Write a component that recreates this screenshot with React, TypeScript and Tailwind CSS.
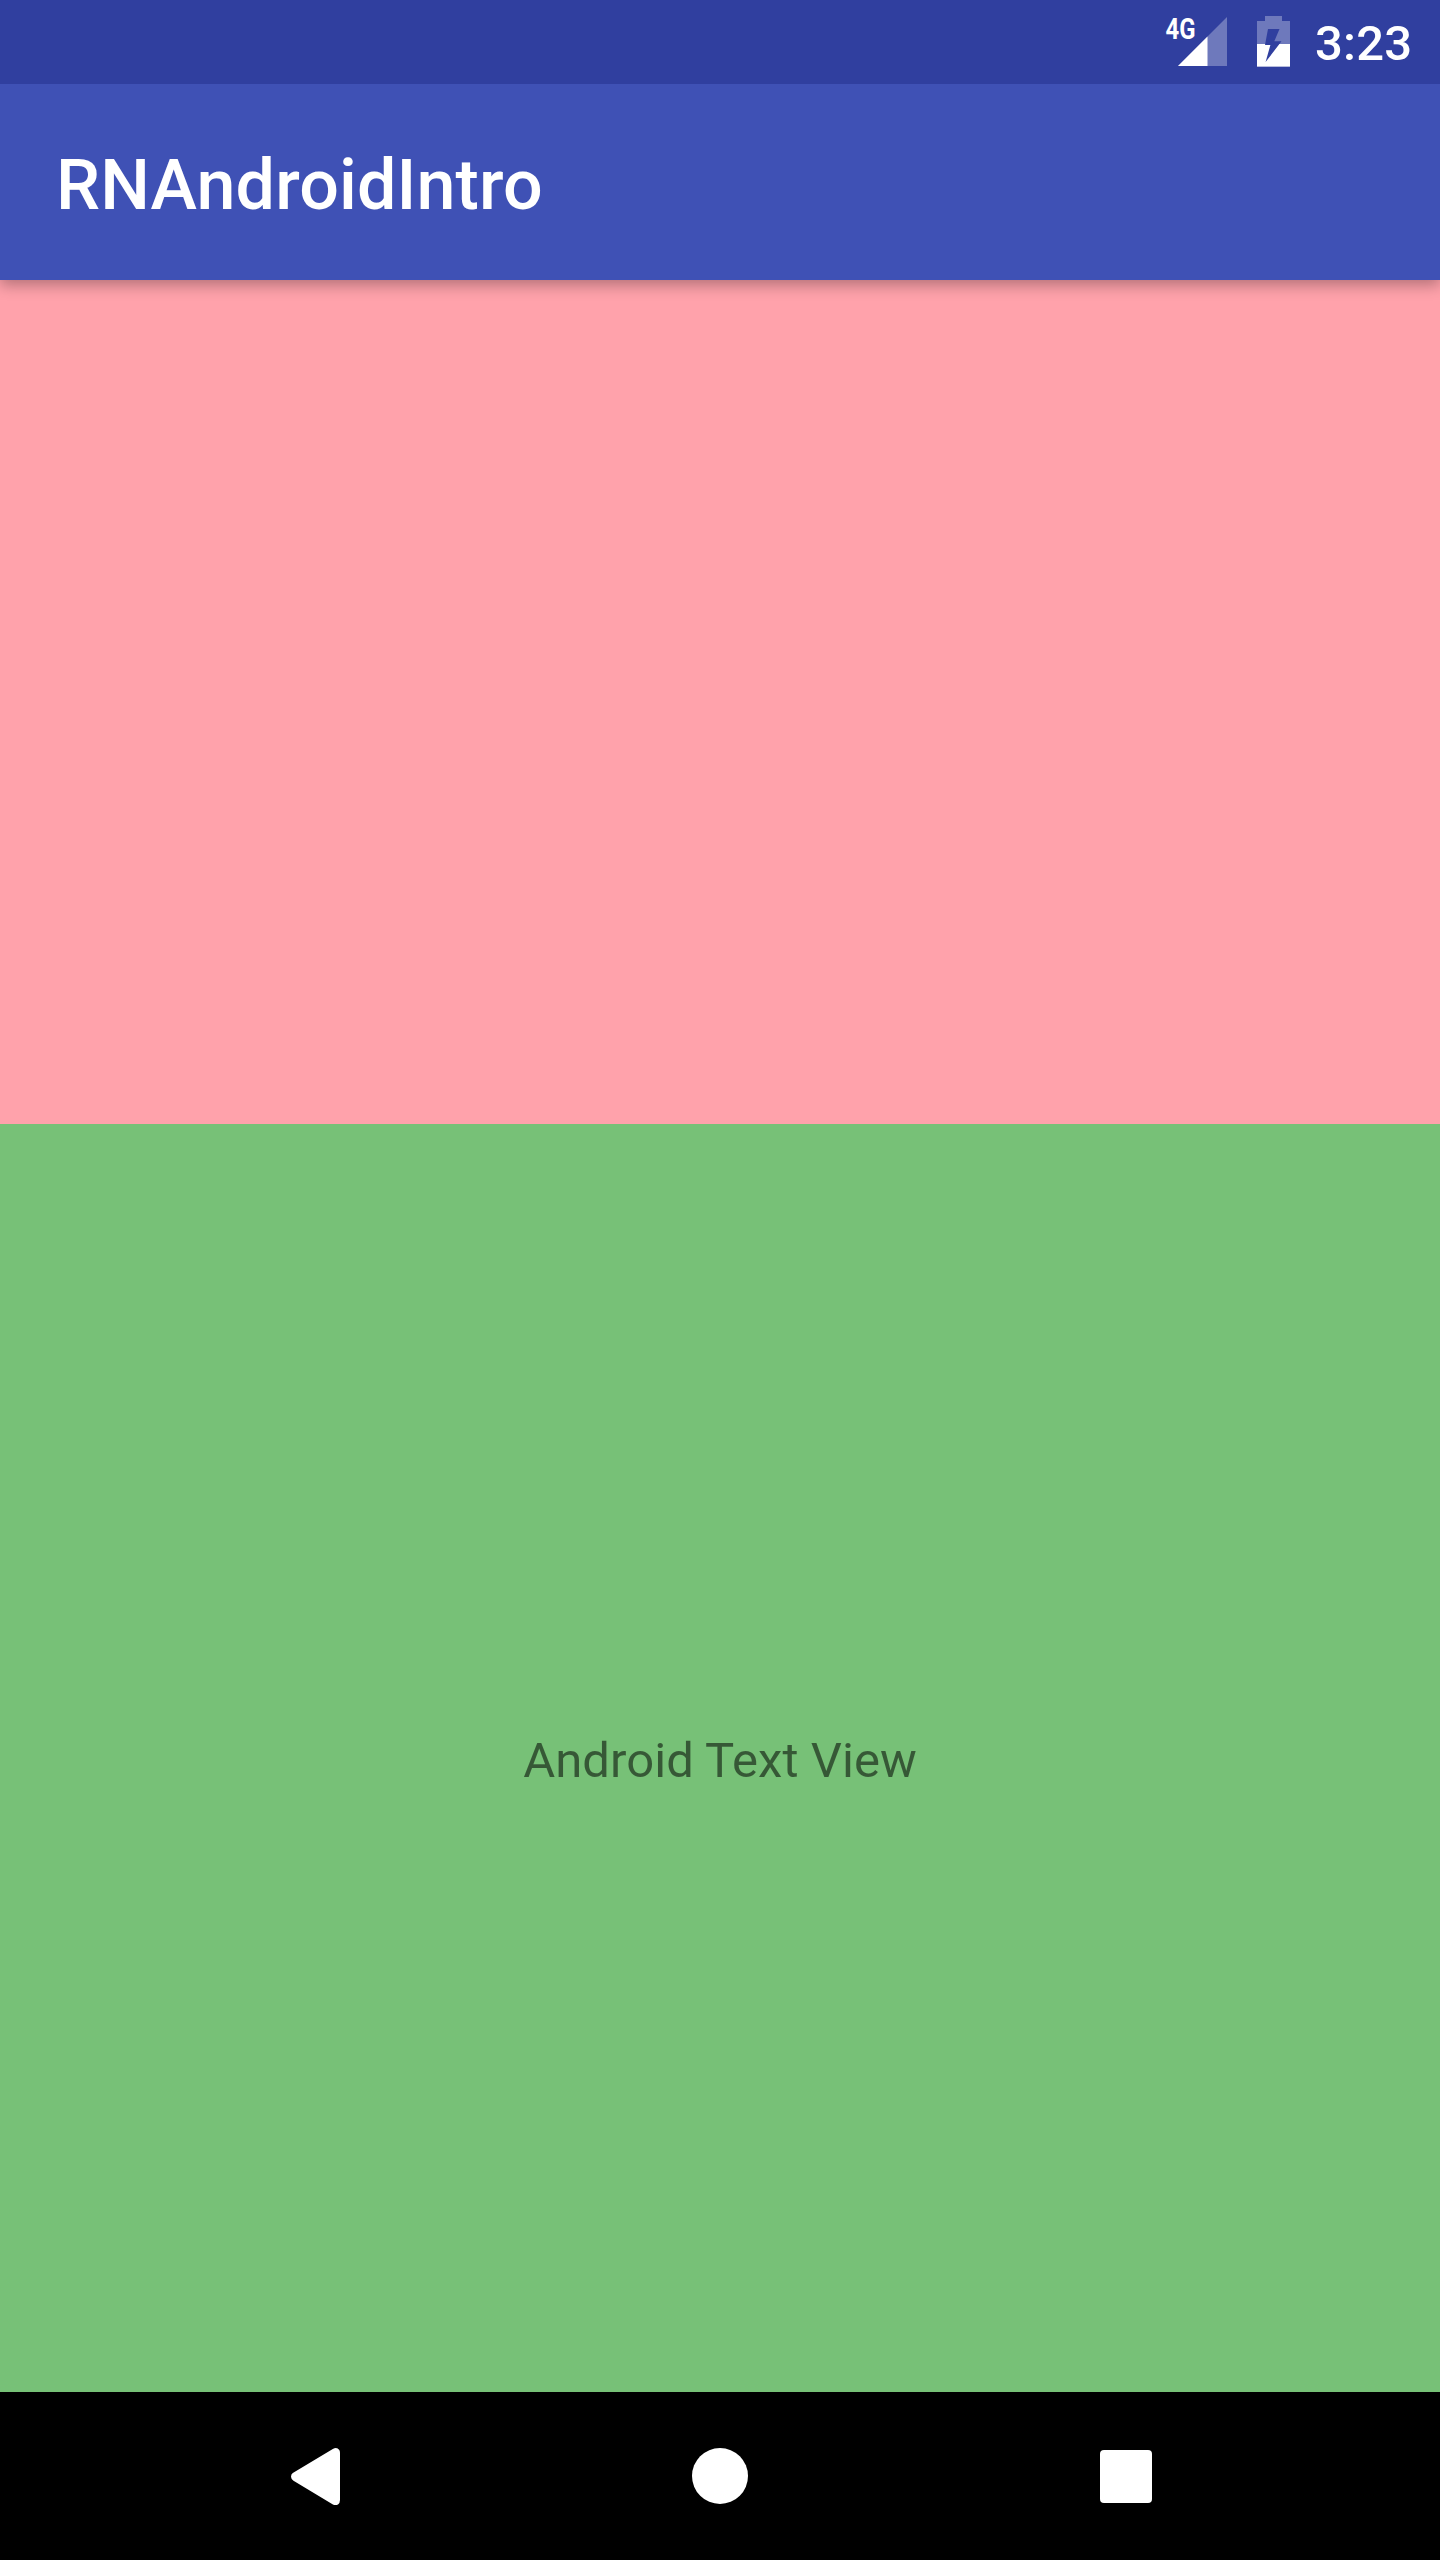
function SignalIcon() {
  return (
    <svg width="68" height="76" viewBox="1160 4 68 76" className="block overflow-visible">
      <path d="M1178 66 1227 66 1227 17Z" fill="#fff" fillOpacity="0.3" />
      <path d="M1178 66 1207.5 66 1207.5 36.5Z" fill="#fff" />
      <text
        x="1165.6"
        y="39"
        fontSize="29"
        fontWeight="700"
        textLength="30"
        lengthAdjust="spacingAndGlyphs"
        fill="#fff"
      >
        4G
      </text>
    </svg>
  );
}

function BatteryIcon() {
  return (
    <svg width="34" height="56" viewBox="1257 14 34 56" className="block">
      <path d="M1257 21H1265V16H1282V21H1290V67H1257Z" fill="#fff" fillOpacity="0.3" />
      <path d="M1257 44H1290V66.500H1257Z" fill="#fff" />
      <path d="M1268 29H1279.5L1274.3 41.2H1281.5L1265.6 62 1270.4 45H1265Z" fill="#303f9f" />
    </svg>
  );
}

function StatusBar() {
  return (
    <div className="relative z-10 flex h-[84px] items-center bg-[#303f9f] pl-[1160px] text-white">
      <SignalIcon />
      <div className="ml-[29px]">
        <BatteryIcon />
      </div>
      <span className="ml-[24px] mt-[3px] whitespace-nowrap text-[49px] font-medium leading-[58px] tracking-[0.25px]">3:23</span>
    </div>
  );
}

function NavigationBar() {
  return (
    <nav className="flex h-[168px] items-start bg-black text-white">
      <svg width="50" height="58" viewBox="290 2447 50 58" className="ml-[290px] mt-[55px] block" fill="currentColor">
        <path d="M292.8 2473.1 332.8 2449Q337 2446.800 339.300 2450Q340 2451 340 2453V2500Q340 2503 338 2504.400Q335.500 2506 332.500 2504.200L293.500 2480.800Q291 2479 291 2476.800Q291 2474.400 292.800 2473.100Z" />
      </svg>
      <div className="ml-[351.500px] mt-[55.500px] size-[56px] rounded-full bg-white" />
      <div className="ml-[352px] mt-[58px] size-[52.500px] rounded-[4px] bg-white" />
    </nav>
  );
}

export default function App() {
  return (
    <div className="flex h-[2560px] w-[1440px] flex-col overflow-hidden font-['Roboto',sans-serif]">
      <StatusBar />
      <header className="relative flex h-[196px] items-center bg-[#3f51b5] px-[56px] shadow-[0_5px_14px_rgba(0,0,0,0.3)]">
        <h1 className="mt-[6px] text-[70px] font-medium leading-[82px] tracking-[0.12px] text-white">RNAndroidIntro</h1>
      </header>
      <main className="flex flex-1 flex-col">
        <section className="h-[844px] bg-[#ffa2ab]" />
        <section className="flex flex-1 items-center justify-center bg-[#77c177]">
          <p className="mt-[6px] text-[49px] leading-[58px] tracking-[0.05px] text-black/54">Android Text View</p>
        </section>
      </main>
      <NavigationBar />
    </div>
  );
}
